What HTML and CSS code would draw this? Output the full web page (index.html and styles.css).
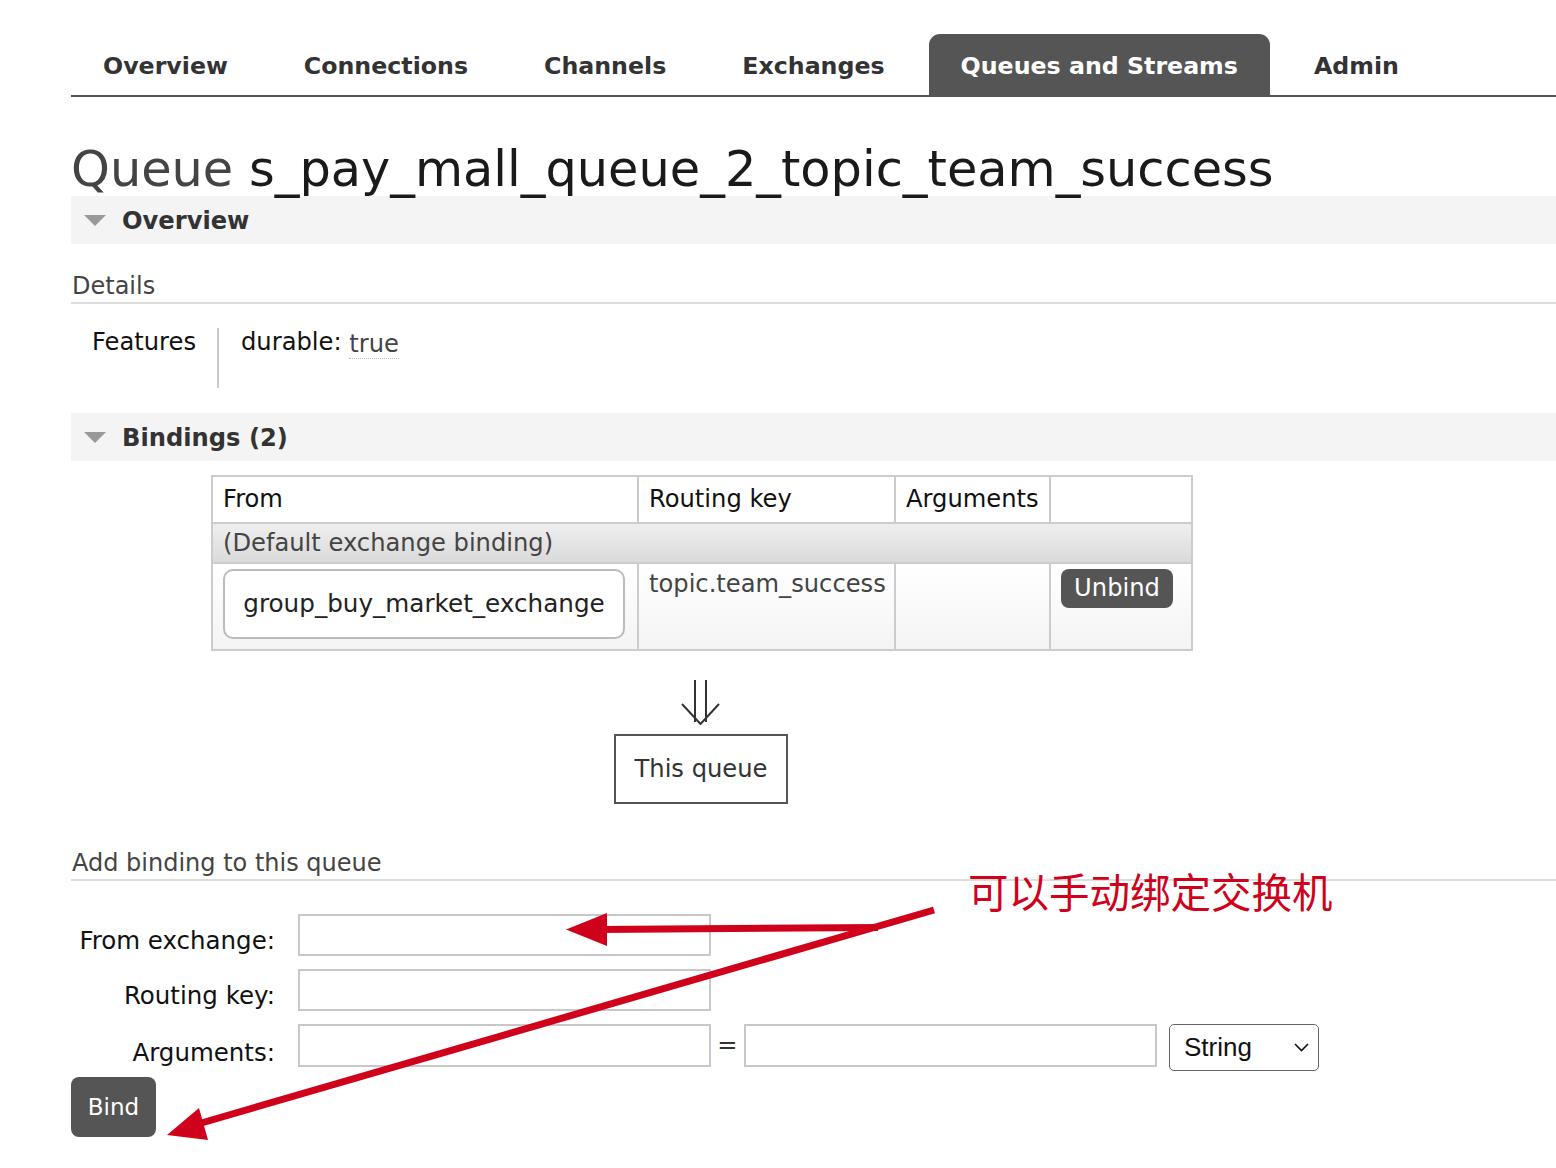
FILE: index.html
```html
<!DOCTYPE html>
<html lang="en">
<head>
<meta charset="utf-8">
<title>Queue s_pay_mall_queue_2_topic_team_success</title>
<link rel="stylesheet" href="styles.css">
</head>
<body>
<div class="page">
  <nav class="tabs">
    <a class="tab">Overview</a>
    <a class="tab">Connections</a>
    <a class="tab">Channels</a>
    <a class="tab">Exchanges</a>
    <a class="tab active">Queues and Streams</a>
    <a class="tab">Admin</a>
  </nav>

  <h1 class="title"><span class="kind">Queue</span> <span class="name">s_pay_mall_queue_2_topic_team_success</span></h1>

  <div class="sec-head"><span class="tri"></span>Overview</div>
  <h3 class="sub">Details</h3>
  <table class="facts">
    <tr><th>Features</th><td>durable: <abbr class="val">true</abbr></td></tr>
  </table>

  <div class="sec-head bind-head"><span class="tri"></span>Bindings (2)</div>

  <div class="bindings">
    <table class="list">
      <colgroup><col class="c1"><col class="c2"><col class="c3"><col class="c4"></colgroup>
      <thead>
        <tr><th>From</th><th>Routing key</th><th>Arguments</th><th></th></tr>
      </thead>
      <tbody>
        <tr class="default-row"><td colspan="4">(Default exchange binding)</td></tr>
        <tr class="bind-row">
          <td><div class="ex-box">group_buy_market_exchange</div></td>
          <td class="rk">topic.team_success</td>
          <td></td>
          <td><button class="btn unbind">Unbind</button></td>
        </tr>
      </tbody>
    </table>
    <div class="flow">
      <svg class="down" width="40" height="46" viewBox="0 0 40 46">
        <path d="M14 1 V43 M25 1 V43 M1 25 L19.5 45 L38 25" fill="none" stroke="#333" stroke-width="2"/>
      </svg>
      <div class="this-queue">This queue</div>
    </div>
  </div>

  <h3 class="sub add-sub">Add binding to this queue</h3>
  <form class="add-form">
    <div class="frow">
      <label class="flabel">From exchange:</label>
      <input class="finput" type="text">
    </div>
    <div class="frow">
      <label class="flabel">Routing key:</label>
      <input class="finput" type="text">
    </div>
    <div class="frow last">
      <label class="flabel">Arguments:</label>
      <input class="finput" type="text">
      <span class="eq">=</span>
      <input class="finput" type="text">
      <div class="select"><span>String</span>
        <svg width="15" height="9" viewBox="0 0 15 9"><path d="M1 1 L7.5 7.5 L14 1" fill="none" stroke="#111" stroke-width="1.6"/></svg>
      </div>
    </div>
    <button class="btn bind" type="button">Bind</button>
  </form>
</div>

<svg class="annot" width="1556" height="1168" viewBox="0 0 1556 1168">
  <g fill="#d0021b" stroke="#d0021b">
    <path d="M878 927.5 L600 929.5" stroke-width="7" fill="none"/>
    <polygon points="566,929.5 607,913 607,946" stroke="none"/>
    <path d="M934 910 L198 1124" stroke-width="7" fill="none"/>
    <polygon points="167,1135 199,1108 208,1140" stroke="none"/>
  </g>
</svg>
<div class="annot-text">可以手动绑定交换机</div>
</body>
</html>
```

FILE: styles.css
```css
html, body {
  margin: 0;
  padding: 0;
  background: #fff;
}
body {
  font-family: "DejaVu Sans", Verdana, sans-serif;
  font-size: 24.2px;
  color: #111;
  position: relative;
  width: 1556px;
  min-height: 1168px;
  overflow: hidden;
}
.page {
  margin-left: 71px;
}

/* nav */
.tabs {
  display: flex;
  margin-top: 34px;
  border-bottom: 2px solid #555;
}
.tab {
  display: block;
  height: 61px;
  box-sizing: border-box;
  padding: 3px 32px 0;
  line-height: 58px;
  margin-right: 12px;
  font-weight: bold;
  font-size: 23.7px;
  color: #333;
  text-decoration: none;
  border-radius: 11px 11px 0 0;
  white-space: nowrap;
}
.tab.active {
  background: #555;
  color: #fff;
}

/* title */
.title {
  font-weight: normal;
  font-size: 49.4px;
  line-height: 54px;
  margin: 45px 0 0;
  white-space: nowrap;
}
.title .kind { color: #444; }
.title .name { color: #1a1a1a; }

/* section headers */
.sec-head {
  background: #f4f4f4;
  height: 48px;
  line-height: 48px;
  font-weight: bold;
  font-size: 24.2px;
  color: #333;
  display: flex;
  align-items: center;
  padding-top: 1px;
  box-sizing: border-box;
}
.tri {
  width: 0;
  height: 0;
  border-left: 11px solid transparent;
  border-right: 11px solid transparent;
  border-top: 11px solid #999;
  margin-left: 13px;
  margin-right: 16px;
}
.bind-head { margin-top: 25px; }

.sub {
  font-weight: normal;
  font-size: 24px;
  color: #444;
  margin: 24px 0 0;
  padding-top: 2px;
  line-height: 32px;
  padding-left: 1px;
  border-bottom: 2px solid #ddd;
}

/* features */
.facts {
  border-collapse: collapse;
  margin-top: 24px;
}
.facts th {
  font-weight: normal;
  text-align: left;
  vertical-align: top;
  padding: 0 21px 32px 21px;
  line-height: 28px;
  border-right: 2px solid #ccc;
  color: #111;
}
.facts td {
  vertical-align: top;
  padding: 0 0 0 22px;
  line-height: 28px;
  color: #111;
}
.val {
  color: #444;
  text-decoration: none;
  border-bottom: 1px dotted #bbb;
  position: relative;
  top: 2px;
}

/* bindings table */
.bindings {
  margin-left: 140px;
  width: 980px;
  margin-top: 14px;
}
.list {
  border-collapse: collapse;
  table-layout: fixed;
  width: 980px;
  border: 2px solid #ccc;
}
.c1 { width: 426px; }
.c2 { width: 257px; }
.c3 { width: 155px; }
.c4 { width: 142px; }
.list th {
  font-weight: normal;
  text-align: left;
  color: #111;
  border: 2px solid #ccc;
  height: 45px;
  padding: 0 10px;
  line-height: 45px;
}
.default-row td {
  border: 2px solid #ccc;
  background: linear-gradient(#efefef, #dadada);
  height: 38px;
  padding: 0 10px;
  color: #444;
  line-height: 38px;
}
.bind-row td {
  border: 2px solid #ccc;
  background: linear-gradient(#fff, #f4f4f4);
  vertical-align: top;
  height: 87px;
  padding: 5px 10px 0;
  line-height: 28px;
  color: #444;
  box-sizing: border-box;
}
.bind-row td.rk { padding-top: 6px; }
.ex-box {
  border: 2px solid #bbb;
  border-radius: 10px;
  height: 70px;
  box-sizing: border-box;
  display: flex;
  align-items: center;
  justify-content: center;
  background: #fff;
  color: #222;
  width: 402px;
  font-size: 24.65px;
}
.btn {
  font-family: "DejaVu Sans", Verdana, sans-serif;
  font-size: 24.2px;
  background: #555;
  color: #fff;
  border: none;
  border-radius: 8px;
  padding: 0;
  cursor: pointer;
}
.unbind {
  width: 112px;
  height: 39px;
  line-height: 39px;
}

.flow {
  display: flex;
  flex-direction: column;
  align-items: center;
  margin-top: 28px;
}
.down {
  display: block;
}
.this-queue {
  margin-top: 9px;
  border: 2px solid #555;
  width: 174px;
  height: 70px;
  box-sizing: border-box;
  display: flex;
  align-items: center;
  justify-content: center;
  color: #333;
}

.add-sub { margin-top: 41px; }

/* form */
.add-form {
  margin-top: 33px;
}
.frow {
  display: flex;
  align-items: flex-end;
  margin-bottom: 13px;
}
.frow.last {
  margin-bottom: 6px;
  align-items: flex-start;
}
.flabel {
  width: 204px;
  text-align: right;
  line-height: 30px;
  margin-right: 23px;
  color: #111;
  font-size: 24.5px;
  flex: none;
  white-space: nowrap;
}
.frow.last .flabel {
  margin-top: 14px;
}
.finput {
  width: 413px;
  height: 42px;
  box-sizing: border-box;
  border: 2px solid #c8c8c8;
  margin: 0;
  padding: 0 6px;
  font-size: 20px;
  background: #fff;
  flex: none;
}
.frow.last .finput {
  height: 43px;
}
.eq {
  width: 33px;
  text-align: center;
  color: #333;
  line-height: 43px;
  flex: none;
}
.select {
  margin-left: 12px;
  width: 150px;
  height: 47px;
  box-sizing: border-box;
  border: 1.5px solid #666;
  border-radius: 5px;
  display: flex;
  align-items: center;
  justify-content: space-between;
  padding: 0 9px 0 14px;
  font-family: "Liberation Sans", Arial, sans-serif;
  font-size: 26px;
  color: #111;
  flex: none;
}
.select svg { display: block; }
.bind {
  display: block;
  width: 85px;
  height: 60px;
  line-height: 60px;
  font-size: 23px;
}

/* annotation overlay */
.annot {
  position: absolute;
  left: 0;
  top: 0;
  pointer-events: none;
}
.annot-text {
  position: absolute;
  left: 968px;
  top: 871px;
  font-family: "Noto Sans CJK SC", "Noto Sans CJK JP", sans-serif;
  font-size: 40.5px;
  line-height: 40px;
  color: #d0021b;
  white-space: nowrap;
}
```
